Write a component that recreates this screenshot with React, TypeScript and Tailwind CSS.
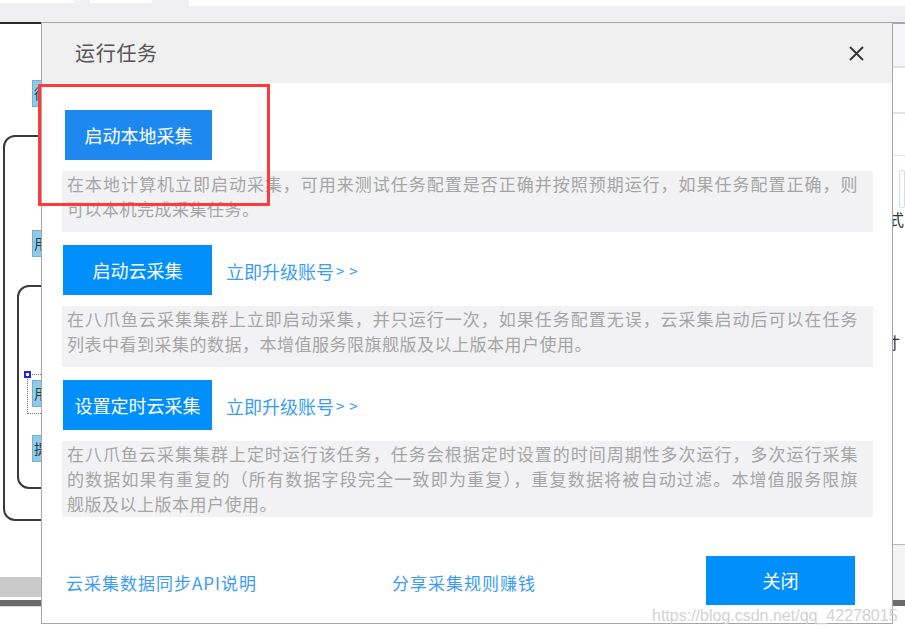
import React from "react";

const FONT = "font-['Noto_Sans_CJK_SC','Microsoft_YaHei',sans-serif]";

function Desc({ lines, h }: { lines: string[]; h: string }) {
  return (
    <div className={`w-[811px] bg-[#f2f2f4] pl-[5px] text-[17px] tracking-[0.5px] text-[#a5a5a5] ${h}`}>
      {lines.map((l, i) => (
        <div
          key={i}
          className={
            i < lines.length - 1
              ? "w-[791px] h-[25px] leading-[25px] whitespace-nowrap text-justify [text-align-last:justify]"
              : "w-[791px] h-[25px] leading-[25px] whitespace-nowrap"
          }
        >
          {l}
        </div>
      ))}
    </div>
  );
}

function Node({ top, ch }: { top: string; ch: string }) {
  return (
    <div className={`absolute left-[32px] ${top} w-[40px] h-[27px] bg-[#8fcbe6] border border-[#6eb3d2] text-[14px] leading-[25px] pl-[1px] text-[#1d3b4a] overflow-hidden`}>
      {ch}
    </div>
  );
}

function Upgrade() {
  return (
    <span className="ml-[14px] mt-[3px] text-[18px] text-[#3a9cf4] flex items-center">
      立即升级账号
      <span className="ml-[2px] text-[15px] tracking-[5px]">&gt;&gt;</span>
    </span>
  );
}

export default function App() {
  return (
    <div className={`relative w-[905px] h-[635px] overflow-hidden bg-white ${FONT}`}>
      {/* background application */}
      <div className="flex flex-col w-full h-full">
        <div className="h-[22px] bg-[#f0f0f2] flex items-start">
          <div className="w-[74px] h-[3px] bg-white" />
          <div className="ml-[16px] w-[62px] h-[3px] bg-white" />
          <div className="ml-[37px] flex-1 h-[6px] bg-white" />
        </div>
        <div className="flex h-[2px]">
          <div className="w-[41px] bg-[#2a2a2a]" />
          <div className="flex-1 bg-[#a8a8a8]" />
        </div>
        <div className="flex flex-1">
          {/* canvas */}
          <div className="flex-1 flex flex-col">
            <div className="relative flex-1">
              <Node top="top-[56px]" ch="循" />
              <div className="absolute left-[3px] top-[111px] w-[200px] h-[386px] border-2 border-[#3a3a3a] rounded-[12px]" />
              <Node top="top-[206px]" ch="用" />
              <div className="absolute left-[17px] top-[261px] w-[150px] h-[204px] border-2 border-[#3a3a3a] rounded-[12px]" />
              <div className="absolute left-[27px] top-[350px] w-[30px] h-[40px] border border-dotted border-[#777]" />
              <div className="absolute left-[24px] top-[347px] w-[7px] h-[7px] border-2 border-[#2222ee] bg-white" />
              <Node top="top-[356px]" ch="用" />
              <Node top="top-[411px]" ch="提" />
            </div>
            <div className="h-[20px] bg-[#c9c9c9]" />
            <div className="h-[3px] bg-white" />
            <div className="h-[6px] bg-[#6a6a6a]" />
            <div className="h-[29px] bg-white border-t border-[#d8d8d8]" />
          </div>
          {/* right panel */}
          <div className="w-[13px] flex flex-col bg-white">
            <div className="h-[44px] bg-[#f5f5f7] border-b-2 border-[#e2e2e6]" />
            <div className="h-[46px] border-b-2 border-[#dfe4f0]" />
            <div className="h-[42px] border-b border-[#dfe4f0]" />
            <div className="h-[14px]" />
            <div className="h-[38px] ml-[7px] border border-[#d5dbe8] rounded-[2px]" />
            <div className="h-[22px] text-[16px] leading-[22px] text-[#333] -ml-[4px]">式</div>
            <div className="h-[124px] flex items-end text-[16px] text-[#333] -ml-[8px]">寸</div>
            <div className="flex-1 border-b border-[#bbb]" />
            <div className="h-[55px] bg-[#f3f3f3]" />
            <div className="h-[6px] bg-[#6a6a6a]" />
            <div className="h-[29px]" />
          </div>
        </div>
      </div>

      {/* dialog */}
      <div className="absolute left-[41px] top-[22px] w-[852px] h-[602px] bg-white border border-[#a6a6a6] flex flex-col">
        <div className="h-[60px] bg-[#f0f0f0] flex items-center justify-between pl-[33px] pr-[28px]">
          <span className="text-[20px] tracking-[0.7px] text-[#555]">运行任务</span>
          <svg width="15" height="15" viewBox="0 0 15 15">
            <path d="M1 1 L14 14 M14 1 L1 14" stroke="#333" strokeWidth="1.8" fill="none" />
          </svg>
        </div>
        <div className="flex flex-col flex-1 px-[20px] pt-[27px] pb-[18px]">
          <div className="ml-[3px] w-[147px] h-[50px] bg-[#1d89f0] text-white text-[18px] flex items-center justify-center">
            启动本地采集
          </div>
          <div className="mt-[11px]">
            <Desc
              h="h-[61px]"
              lines={[
                "在本地计算机立即启动采集，可用来测试任务配置是否正确并按照预期运行，如果任务配置正确，则",
                "可以本机完成采集任务。",
              ]}
            />
          </div>
          <div className="mt-[13px] flex items-center">
            <div className="ml-[1px] w-[149px] h-[50px] bg-[#0190fb] text-white text-[18px] flex items-center justify-center">
              启动云采集
            </div>
            <Upgrade />
          </div>
          <div className="mt-[11px]">
            <Desc
              h="h-[61px]"
              lines={[
                "在八爪鱼云采集集群上立即启动采集，并只运行一次，如果任务配置无误，云采集启动后可以在任务",
                "列表中看到采集的数据，本增值服务限旗舰版及以上版本用户使用。",
              ]}
            />
          </div>
          <div className="mt-[13px] flex items-center">
            <div className="ml-[1px] w-[149px] h-[50px] bg-[#0190fb] text-white text-[18px] flex items-center justify-center">
              设置定时云采集
            </div>
            <Upgrade />
          </div>
          <div className="mt-[11px]">
            <Desc
              h="h-[76px]"
              lines={[
                "在八爪鱼云采集集群上定时运行该任务，任务会根据定时设置的时间周期性多次运行，多次运行采集",
                "的数据如果有重复的（所有数据字段完全一致即为重复），重复数据将被自动过滤。本增值服务限旗",
                "舰版及以上版本用户使用。",
              ]}
            />
          </div>
          <div className="mt-auto flex items-center">
            <span className="ml-[4px] w-[326px] mt-[4px] text-[17px] tracking-[1px] text-[#3a9cf4]">
              云采集数据同步API说明
            </span>
            <span className="mt-[4px] text-[17px] tracking-[1px] text-[#3a9cf4]">分享采集规则赚钱</span>
            <div className="ml-auto mr-[17px] w-[149px] h-[49px] bg-[#0190fb] text-white text-[18px] flex items-center justify-center">
              关闭
            </div>
          </div>
        </div>
      </div>

      {/* red highlight */}
      <div className="absolute left-[38px] top-[84px] w-[232px] h-[122px] border-[3px] border-[#ff3a3a]" />

      {/* watermark */}
      <div className="absolute left-[652px] top-[606px] text-[16px] leading-[20px] text-[#d2d2d2] font-['Liberation_Sans',sans-serif]">
        https://blog.csdn.net/qq_42278015
      </div>
    </div>
  );
}
